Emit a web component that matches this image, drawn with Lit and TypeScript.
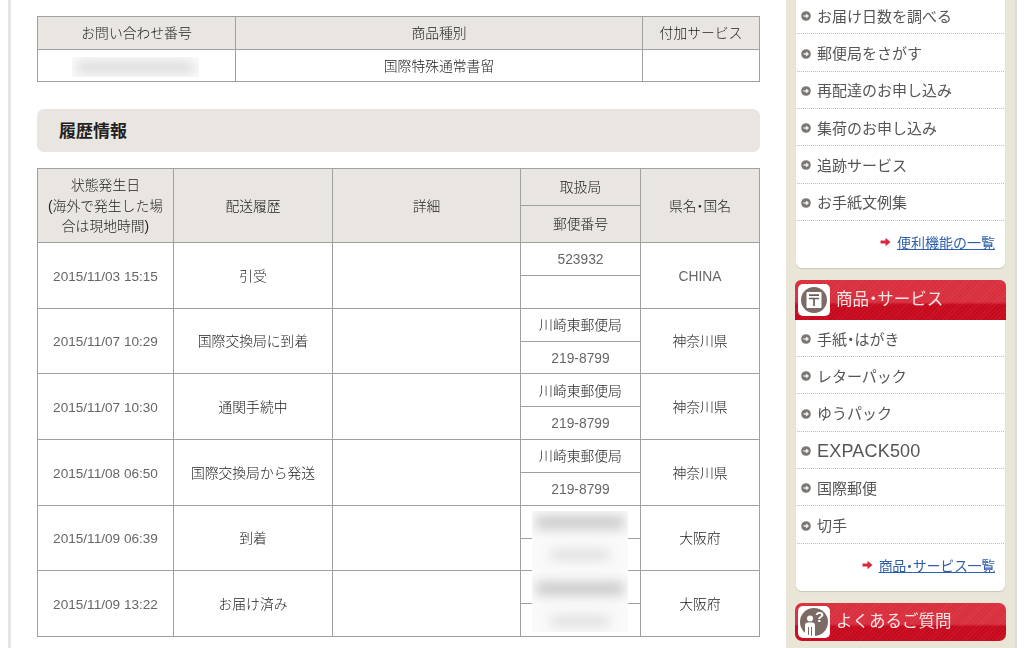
import { LitElement, html, css, svg } from "lit";
import { customElement } from "lit/decorators.js";

const dot = (t: string) => {
  const parts = t.split("・");
  return parts.map((p, i) => (i < parts.length - 1 ? html`${p}<span class="dot">・</span>` : p));
};

const rows = [
  ["2015/11/03 15:15", "引受", "523932", "", "CHINA"],
  ["2015/11/07 10:29", "国際交換局に到着", "川崎東郵便局", "219-8799", "神奈川県"],
  ["2015/11/07 10:30", "通関手続中", "川崎東郵便局", "219-8799", "神奈川県"],
  ["2015/11/08 06:50", "国際交換局から発送", "川崎東郵便局", "219-8799", "神奈川県"],
  ["2015/11/09 06:39", "到着", "", "", "大阪府"],
  ["2015/11/09 13:22", "お届け済み", "", "", "大阪府"],
];

const menu1 = ["お届け日数を調べる", "郵便局をさがす", "再配達のお申し込み", "集荷のお申し込み", "追跡サービス", "お手紙文例集"];
const menu2 = ["手紙・はがき", "レターパック", "ゆうパック", "EXPACK500", "国際郵便", "切手"];

const bullet = svg`<svg class="bullet" width="10" height="10" viewBox="0 0 10 10"><circle cx="5" cy="5" r="4.8" fill="#7b7773"/><path d="M2.5 5H7M5.2 3.2L7 5L5.2 6.8" fill="none" stroke="#ececec" stroke-width="1.4"/></svg>`;
const arrow = svg`<svg class="arrow" width="11" height="10" viewBox="0 0 11 10"><path d="M0.5 3.6H5.5V0.8L10.5 5L5.5 9.2V6.4H0.5Z" fill="#d8283a"/></svg>`;
const postIcon = svg`<svg class="ic" width="26" height="26" viewBox="0 0 26 26"><circle cx="13" cy="13" r="13" fill="#7c6b65"/><rect x="5.5" y="5" width="15" height="16" rx="1" fill="#fff"/><path d="M8 8.2H18M8 11.5H18M13 11.5V19" fill="none" stroke="#6d5d57" stroke-width="1.7"/></svg>`;
const qIcon = svg`<svg class="ic" width="28" height="28" viewBox="0 0 28 28"><circle cx="14" cy="14" r="14" fill="#7c6b65"/><circle cx="10" cy="10.5" r="3" fill="#fff"/><path d="M5 28V17.5Q5 14.5 8 14.5H12Q15 14.5 15 17.5V28H12V19H11V28H9V19H8V28Z" fill="#fff"/><text x="19.5" y="14" text-anchor="middle" font-family="Liberation Sans" font-weight="700" font-size="15" fill="#fff">?</text></svg>`;

@customElement("app-root")
export class AppRoot extends LitElement {
  static styles = css`
    :host {
      display: flex;
      width: 1024px;
      height: 648px;
      overflow: hidden;
      background: #fff;
      font-family: "Liberation Sans", "Noto Sans CJK JP", sans-serif;
      font-size: 13.8px;
      font-weight: 300;
      color: #222;
    }
    .dot { font-feature-settings: "palt"; }
    .gutter { width: 8px; flex: none; }
    .edge { width: 3px; flex: none; background: #e4e4e4; }
    .main {
      width: 775px;
      flex: none;
      box-sizing: border-box;
      padding: 16px 26px 0;
      filter: blur(0.3px);
    }
    table {
      border-collapse: collapse;
      table-layout: fixed;
      width: 722px;
    }
    th, td {
      box-sizing: border-box;
      border: 1px solid #a0a0a0;
      text-align: center;
      vertical-align: middle;
      padding: 3px 0 0;
      font-weight: 300;
      line-height: 20.5px;
    }
    th { background: #e9e5e1; }
    .t1 th, .t1 td { height: 32.5px; }
    .heading {
      margin: 27px 0 16px;
      width: 723px;
      height: 43px;
      box-sizing: border-box;
      padding: 0 0 2px 22px;
      display: flex;
      align-items: center;
      background: #e9e5e1;
      border-radius: 7px;
      font-size: 17px;
      font-weight: 700;
      color: #222;
    }
    .t2-wrap { position: relative; width: 722px; }
    .t2 th.h { height: 37px; }
    .t2 td { height: 32.85px; }
    .t2 td.d { font-size: 13.6px; color: #666; }
    .t2 td.l { color: #666; }
    .blob-wrap {
      position: absolute;
      background: #fff;
      overflow: hidden;
    }
    .b1 { left: 35px; top: 41px; width: 127px; height: 20px; background: #fcfcfc; }
    .b2 {
      left: 495px;
      top: 343px;
      width: 96px;
      height: 121px;
      background: #fafafa;
    }
    .blob {
      position: absolute;
      background: #c8c8c8;
      filter: blur(6px);
      border-radius: 3px;
    }
    .b1 .blob { background: #dcdcdc; }
    .side {
      width: 229px;
      flex: none;
      box-sizing: border-box;
      background: #e9e6d8;
      padding: 0 10px 0 10px;
      filter: blur(0.4px);
    }
    .panel {
      width: 209px;
      box-sizing: border-box;
      background: #fff;
      border-radius: 0 0 6px 6px;
      box-shadow: 0 1px 1px #c9c7bb;
      font-family: "Noto Sans CJK JP", "Liberation Sans", sans-serif;
      font-weight: 400;
    }
    .item {
      height: 37.3px;
      box-sizing: border-box;
      margin: 0 1px;
      padding: 0 0 0 4px;
      display: flex;
      align-items: center;
      gap: 6px;
      border-bottom: 1px dotted #bdbdbd;
      font-size: 15px;
      color: #555;
      white-space: nowrap;
    }
    .item.first { height: 34.4px; padding-bottom: 3px; }
    .bullet { flex: none; margin-top: 2px; }
    .latin { font-family: "Liberation Sans", sans-serif; font-size: 18px; letter-spacing: 0.2px; margin-top: 4px; }
    .more {
      height: 47px;
      padding: 0 10px 4px 0;
      box-sizing: border-box;
      display: flex;
      align-items: center;
      justify-content: flex-end;
      gap: 6px;
      font-size: 14px;
    }
    .more a { color: #2f5fa8; text-decoration: underline; }
    .tight { letter-spacing: -0.3px; }
    .redbar {
      width: 211px;
      margin-left: -1px;
      box-sizing: border-box;
      display: flex;
      align-items: center;
      gap: 6px;
      padding: 0 0 0 3px;
      font-family: "Noto Sans CJK JP", "Liberation Sans", sans-serif;
      font-size: 16.5px;
      font-weight: 400;
      color: #f8e4e4;
      background:
        repeating-linear-gradient(135deg, rgba(255,255,255,0.05) 0 1px, rgba(255,255,255,0) 1px 3px),
        linear-gradient(#d9303e 0, #d8303e 55%, #c60a1e 62%, #c80a1e 100%);
    }
    .redbar span:last-child { margin-top: -3px; }
    .r1 { margin-top: 12px; height: 40px; border-radius: 6px 6px 0 0; }
    .r2 { margin-top: 12px; height: 38px; border-radius: 7px; }
    .iconbox {
      width: 32px;
      height: 32px;
      flex: none;
      background: #fff;
      border-radius: 5px;
      display: flex;
      align-items: center;
      justify-content: center;
    }
    .right-line { width: 2px; flex: none; background: #dcdcdc; }
  `;

  render() {
    return html`
      <div class="gutter"></div>
      <div class="edge"></div>
      <main class="main">
        <div class="t2-wrap">
          <table class="t1">
            <colgroup><col style="width:198px" /><col style="width:407px" /><col style="width:117px" /></colgroup>
            <tr><th>お問い合わせ番号</th><th>商品種別</th><th>付加サービス</th></tr>
            <tr><td></td><td>国際特殊通常書留</td><td></td></tr>
          </table>
          <div class="blob-wrap b1">
            <div class="blob" style="left:4px;top:4px;width:119px;height:13px"></div>
          </div>
        </div>
        <div class="heading">履歴情報</div>
        <div class="t2-wrap">
          <table class="t2">
            <colgroup>
              <col style="width:136px" /><col style="width:159px" /><col style="width:188px" /><col style="width:120px" /><col style="width:119px" />
            </colgroup>
            <tr>
              <th rowspan="2">状態発生日<br />(海外で発生した場<br />合は現地時間)</th>
              <th rowspan="2">配送履歴</th>
              <th rowspan="2">詳細</th>
              <th class="h">取扱局</th>
              <th rowspan="2">${dot("県名・国名")}</th>
            </tr>
            <tr><th class="h">郵便番号</th></tr>
            ${rows.map(
              (r) => html`
                <tr>
                  <td rowspan="2" class="d">${r[0]}</td>
                  <td rowspan="2">${r[1]}</td>
                  <td rowspan="2"></td>
                  <td class=${/^\d/.test(r[2]) ? "l" : ""}>${r[2]}</td>
                  <td rowspan="2" class=${r[4] === "CHINA" ? "l" : ""}>${r[4]}</td>
                </tr>
                <tr><td class="l">${r[3]}</td></tr>
              `
            )}
          </table>
          <div class="blob-wrap b2">
            <div class="blob" style="left:4px;top:5px;width:88px;height:13px"></div>
            <div class="blob" style="left:18px;top:38px;width:60px;height:12px;opacity:.5"></div>
            <div class="blob" style="left:4px;top:71px;width:88px;height:13px"></div>
            <div class="blob" style="left:18px;top:104px;width:60px;height:12px;opacity:.5"></div>
          </div>
        </div>
      </main>
      <aside class="side">
        <div class="panel">
          ${menu1.map((m, i) => html`<div class="item ${i === 0 ? "first" : ""}">${bullet}<span>${m}</span></div>`)}
          <div class="more">${arrow}<a>便利機能の一覧</a></div>
        </div>
        <div class="redbar r1"><span class="iconbox">${postIcon}</span><span>${dot("商品・サービス")}</span></div>
        <div class="panel">
          ${menu2.map(
            (m) => html`<div class="item">${bullet}<span class=${m === "EXPACK500" ? "latin" : ""}>${dot(m)}</span></div>`
          )}
          <div class="more">${arrow}<a class="tight">${dot("商品・サービス")}一覧</a></div>
        </div>
        <div class="redbar r2"><span class="iconbox">${qIcon}</span><span>よくあるご質問</span></div>
      </aside>
      <div class="right-line"></div>
    `;
  }
}
